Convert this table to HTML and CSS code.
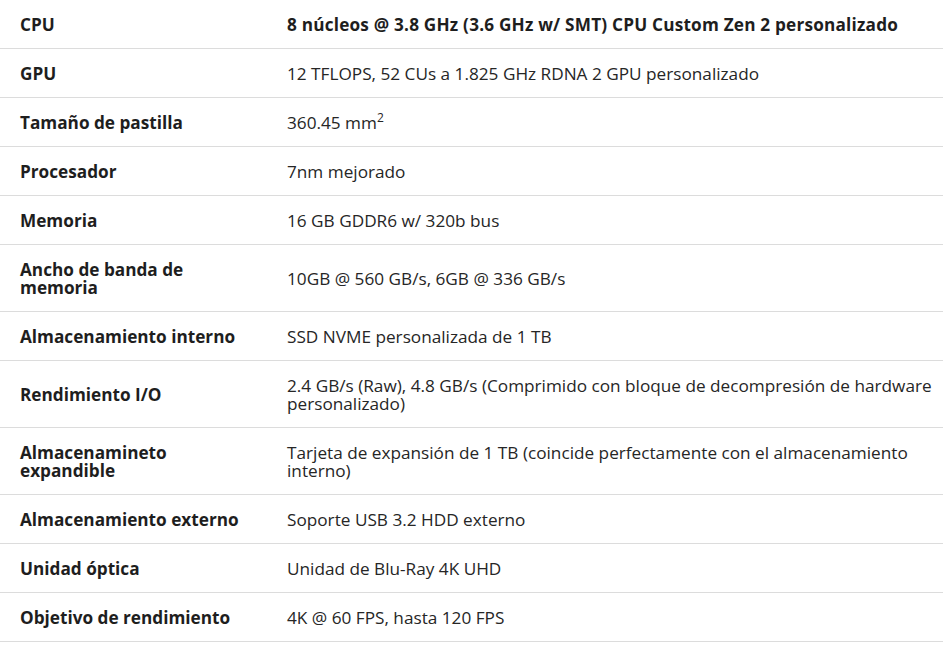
FILE: index.html
```html
<!DOCTYPE html>
<html lang="es">
<head>
<meta charset="utf-8">
<title>Especificaciones</title>
<link rel="stylesheet" href="styles.css">
</head>
<body>
<table class="specs">
  <colgroup><col class="c-label"><col class="c-value"></colgroup>
  <tbody>
    <tr><th>CPU</th><td class="strong">8 núcleos @ 3.8 GHz (3.6 GHz w/ SMT) CPU Custom Zen 2 personalizado</td></tr>
    <tr><th>GPU</th><td>12 TFLOPS, 52 CUs a 1.825 GHz RDNA 2 GPU personalizado</td></tr>
    <tr><th>Tamaño de pastilla</th><td>360.45 mm<sup>2</sup></td></tr>
    <tr><th>Procesador</th><td>7nm mejorado</td></tr>
    <tr><th>Memoria</th><td>16 GB GDDR6 w/ 320b bus</td></tr>
    <tr><th>Ancho de banda de memoria</th><td>10GB @ 560 GB/s, 6GB @ 336 GB/s</td></tr>
    <tr><th>Almacenamiento interno</th><td>SSD NVME personalizada de 1 TB</td></tr>
    <tr><th>Rendimiento I/O</th><td>2.4 GB/s (Raw), 4.8 GB/s (Comprimido con bloque de decompresión de hardware personalizado)</td></tr>
    <tr><th>Almacenamineto expandible</th><td>Tarjeta de expansión de 1 TB (coincide perfectamente con el almacenamiento interno)</td></tr>
    <tr><th>Almacenamiento externo</th><td>Soporte USB 3.2 HDD externo</td></tr>
    <tr><th>Unidad óptica</th><td>Unidad de Blu-Ray 4K UHD</td></tr>
    <tr><th>Objetivo de rendimiento</th><td>4K @ 60 FPS, hasta 120 FPS</td></tr>
  </tbody>
</table>
</body>
</html>
```
FILE: styles.css
```css
html, body {
  margin: 0;
  padding: 0;
  background: #ffffff;
}
body {
  font-family: "Open Sans", "Noto Sans", sans-serif;
  font-size: 17.2px;
  color: #222222;
}
.specs {
  width: 943px;
  border-collapse: collapse;
  table-layout: fixed;
}
.c-label { width: 267px; }
.specs th,
.specs td {
  text-align: left;
  vertical-align: middle;
  line-height: 18px;
  padding: 16px 0 14px 20px;
  border-bottom: 1px solid #dcdcdc;
}
.specs th {
  font-weight: 700;
  color: #1e1e1e;
  padding-right: 20px;
}
.specs td {
  font-weight: 400;
  color: #262626;
}
.specs td.strong {
  font-weight: 700;
  color: #1e1e1e;
  letter-spacing: 0.2px;
}
.specs sup {
  font-size: 12px;
  line-height: 0;
  vertical-align: 7px;
}
```
